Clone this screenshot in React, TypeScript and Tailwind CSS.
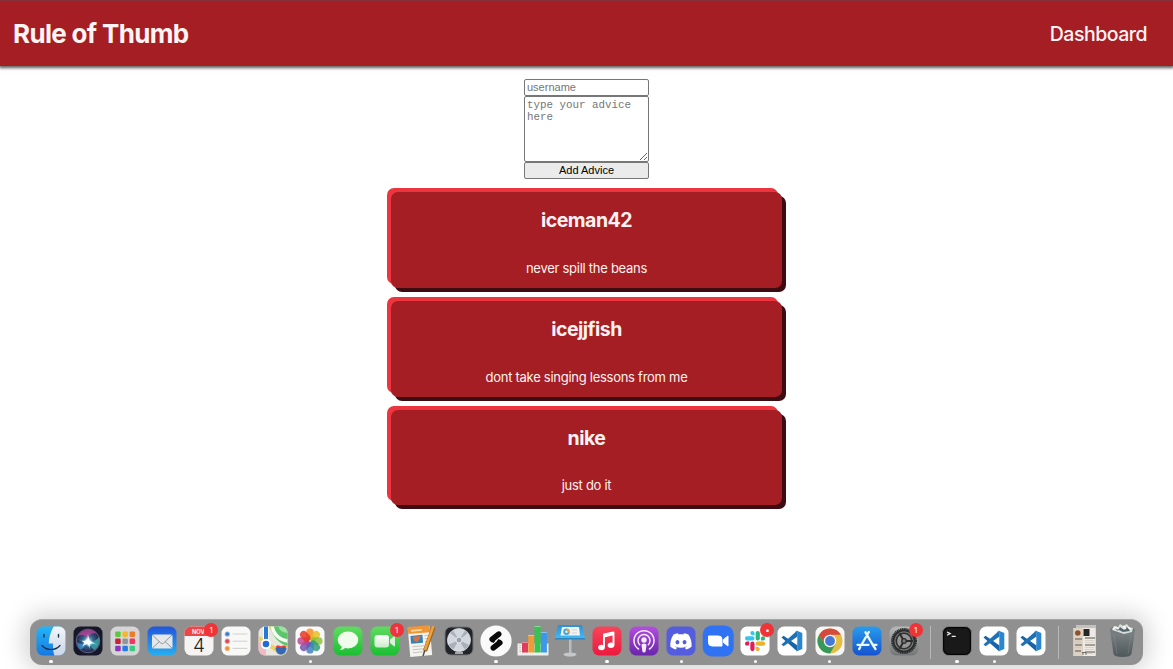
import type { ReactNode } from "react";

type DockItem = { name: string; art: ReactNode; dot?: boolean; badge?: string };

const advice = [
  { user: "iceman42", text: "never spill the beans" },
  { user: "icejjfish", text: "dont take singing lessons from me" },
  { user: "nike", text: "just do it" },
];

function Tile({ fill }: { fill: string }) {
  return <rect x="1.5" y="1.5" width="29" height="29" rx="6.5" fill={fill} />;
}

function Grad({ id, a, b }: { id: string; a: string; b: string }) {
  return (
    <linearGradient id={id} x1="0" y1="0" x2="0" y2="1">
      <stop offset="0" stopColor={a} />
      <stop offset="1" stopColor={b} />
    </linearGradient>
  );
}

const finder = (
  <>
    <defs><clipPath id="finderClip"><rect x="1.5" y="1.5" width="29" height="29" rx="6.5" /></clipPath></defs>
    <g clipPath="url(#finderClip)">
      <rect width="32" height="32" fill="url(#gFinder)" />
      <path d="M19 1C15.5 7 14 12 13.700 18.500H18C17.800 23 18.300 27 19.500 31H32V1Z" fill="url(#gFace)" />
    </g>
    <path d="M9 9.500v2.500M23.500 9.500v2.500" stroke="#18324c" strokeWidth="1.400" strokeLinecap="round" />
    <path d="M7 20.500C11.500 25.800 20.500 25.800 25 20.500" fill="none" stroke="#18324c" strokeWidth="1.200" strokeLinecap="round" />
  </>
);

const siri = (
  <>
    <Tile fill="#17172b" />
    <circle cx="16" cy="16" r="11.800" fill="url(#gSiri)" stroke="#8796b0" strokeWidth=".6" />
    <path d="M6 11C9 4 20 2 25 9C20 7 17 10 16 15C14 10 11 9 6 11Z" fill="#c0459e" opacity=".75" />
    <path d="M5 17C10 21 13 18 15 15C13 22 11 25 8 24Q5 21 5 17Z" fill="#3b9bd8" opacity=".75" />
    <path d="M16 15C20 18 24 16 27 12Q29 20 23 25C21 25 18 20 16 15Z" fill="#39a9a8" opacity=".8" />
    <path d="M6 14C12 17 14 16 16 9C17 15 19 16 26 20C21 19 18 17 18 24C16 20 13 18 9 23C12 19 14 17 6 14Z" fill="#9eeaf0" opacity=".6" />
    <path d="M7 15C13 17 15 16 16.500 11C17 16 19 17 23 18.500C19 18 18 18 17.500 22C16 18 14 18 10 22C13 18 14 17 7 15Z" fill="#fff" />
  </>
);

const launchColors = ["#59c942", "#f3b72f", "#ee7c25", "#c82235", "#8e969a", "#ef3760", "#8d33bc", "#267be5", "#3bc980"];
const launchpad = (
  <>
    <Tile fill="#d5d5d7" />
    {launchColors.map((color, i) => (
      <rect key={color} x={6.2 + (i % 3) * 7.2} y={6.4 + Math.floor(i / 3) * 7.2} width="5.500" height="5.500" rx="1.100" fill={color} />
    ))}
  </>
);

const mail = (
  <>
    <Tile fill="url(#gMail)" />
    <rect x="6" y="9.500" width="20.500" height="14" rx="1.500" fill="#e5e7e9" />
    <path d="m6.500 10 8.200 8q1.500 1.300 3 0L26 10M6.500 23l7-6.500M26 23l-7-6.500" fill="none" stroke="#7c858d" strokeWidth=".8" />
  </>
);

const calendar = (
  <>
    <Tile fill="#f5f4f2" />
    <path d="M1.500 11V8A6.500 6.500 0 0 1 8 1.500H24A6.500 6.500 0 0 1 30.500 8V11Z" fill="#ef4545" />
    <text x="15.300" y="8.800" textAnchor="middle" fontSize="5.700" fontWeight="600" fill="#fff">NOV</text>
    <text x="16" y="26.500" textAnchor="middle" fontSize="19" fontWeight="300" fill="#232323">4</text>
  </>
);

const reminders = (
  <>
    <Tile fill="#f8f8f7" />
    {["#3378cb", "#df424e", "#ee8c31"].map((color, i) => (
      <g key={color} transform={`translate(0 ${i * 7.2})`}>
        <circle cx="7.300" cy="9" r="2.600" fill={color} opacity=".6" />
        <circle cx="7.300" cy="9" r="1.600" fill={color} />
        <path d="M12.500 9h15" stroke="#c5c5c5" strokeWidth=".8" />
      </g>
    ))}
  </>
);

const maps = (
  <>
    <defs><clipPath id="mapClip"><rect x="1.500" y="1.500" width="29" height="29" rx="6.500" /></clipPath></defs>
    <g clipPath="url(#mapClip)">
      <path fill="#e8e7df" d="M0 0h32v32H0z" />
      <path fill="#edb9c2" d="M1 17h8v14H1z" />
      <path d="M2 13 31 33M12 0 32 22" stroke="#eed15d" strokeWidth="4" />
      <path d="M13 0C15 12 23 20 32 21V0Z" fill="#58c669" />
      <path d="M15 0C16 10 24 16 32 16" fill="none" stroke="#f8f8f2" strokeWidth="3.500" />
      <path d="M21 0q1 8 11 8V0z" fill="#a2dfa5" />
      <path d="M9 0v19" stroke="#f7fbff" strokeWidth="6" />
      <path d="M9 0v19" stroke="#287bd5" strokeWidth="4" />
      <circle cx="9" cy="19" r="5.200" fill="white" /><circle cx="9" cy="19" r="3.300" fill="#216cd0" />
      <path d="m18 23 3-2 3 1 3-1 3 2c-1 3-1 6-6 7-5-1-5-4-6-7" fill="#3568b2" stroke="#ddd" strokeWidth=".5" />
      <path d="m19 22 2-1 3 1 3-1 2 1" stroke="#dd4848" strokeWidth="1.500" fill="none" />
    </g>
  </>
);

const petals = ["#f58a1f", "#e3bd20", "#8cc034", "#2f9c78", "#3f80c4", "#7450ac", "#bb4390", "#ea3326"];
const photos = (
  <>
    <Tile fill="#fafafa" />
    {petals.map((color, i) => <rect key={color} x="12.300" y="3.400" width="7.400" height="11.800" rx="3.700" fill={color} opacity=".84" transform={`rotate(${i * 45} 16 16)`} />)}
  </>
);

const messages = (
  <>
    <Tile fill="url(#gGreen)" />
    <ellipse cx="16" cy="15" rx="10.300" ry="8.500" fill="#f0fbeb" />
    <path d="M10 20c0 3-1 4-2.500 5 4 0 5.500-1.500 6.500-3" fill="#e7f5e3" />
  </>
);

const facetime = (
  <>
    <Tile fill="url(#gGreen)" />
    <rect x="5.500" y="10" width="14.500" height="12.500" rx="3" fill="url(#gWhite)" />
    <path d="M21 14.500 25 11.300q1-.6 1 .6v8.700q0 1.200-1 .6l-4-3.200z" fill="#dcf1d9" />
  </>
);

const pages = (
  <>
    <g transform="rotate(-5 15 17)">
      <path fill="#f4f3ee" d="M3 2h22v29H3z" />
      <path fill="#ef9637" d="M3 1h22v7H3z" />
      <path stroke="#ffd9a4" strokeWidth="1.600" d="M6 5h11" />
      <path fill="#3482b8" d="M5 10h12v8H5z" />
      <path d="m7 11 8 0-1 3-3 3-3-2" fill="#dd7040" />
      <path d="M19 11h4m-4 3h4m-4 3h3M6 21h12M6 24h12M6 27h11" stroke="#c4c4c0" />
    </g>
    <path d="m27.500 2-8.500 24" stroke="#a26222" strokeWidth="4.200" />
    <path d="m27 2-8 23" stroke="#f0a136" strokeWidth="2.600" strokeLinecap="round" />
    <path d="m19 25-2 6" stroke="#494949" strokeWidth="1.400" />
  </>
);

const logic = (
  <>
    <rect x="2" y="2" width="28" height="28" rx="6" fill="#22242a" stroke="#737477" />
    <circle cx="16" cy="15" r="11.500" fill="#a9b0b8" stroke="#dce0e5" strokeWidth=".7" />
    <path d="M16 15 10 5.500Q16 2 22 5.500ZM16 15 25 8q4 7 1 12ZM16 15l6 10q-6 3-12 0ZM16 15 5 20q-2-6 2-12Z" fill="#e5e9ee" opacity=".7" />
    <circle cx="16" cy="15" r="3" fill="#9aa3ab" stroke="#e5e8eb" />
    <path d="M12 28h8" stroke="#fff" strokeWidth="1.200" />
  </>
);

const splice = (
  <>
    <circle cx="16" cy="16" r="15.600" fill="#fafafa" />
    <path d="M10.200 12.300 17.200 6.800Q19.500 5.300 21 7.500 22.500 9.800 20.300 11.500L15.300 15.600 13.900 18.100Q10.600 17.500 9.400 15.300 8.800 13.500 10.200 12.300Z" fill="#080a09" />
    <path d="M21.800 19.700 14.800 25.200Q12.500 26.700 11 24.500 9.500 22.200 11.700 20.500L16.700 16.400 18.100 13.900Q21.400 14.500 22.600 16.700 23.200 18.500 21.800 19.700Z" fill="#080a09" />
    <path d="m13 18.900 5.800-5.500" stroke="#fafafa" strokeWidth=".6" />
  </>
);

const numbers = (
  <>
    <path d="M.5 18.500h31v12H.500z" fill="#eeeeec" /><path d="M3 20v8m0-1.500h27" stroke="#b3b3b3" strokeDasharray="1 1" />
    {([ ["#dd3f5a", 5, 17], ["#f29a35", 11.3, 10], ["#35c352", 17.6, 1], ["#3b97e9", 23.9, 7] ] as [string, number, number][]).map(([color, x, y]) => (
      <g key={color}><rect x={x} y={y} width="6" height={27.5 - y} fill={color} /><path d={`M${x} ${y + .5}h6`} stroke="#fff" opacity=".4" /></g>
    ))}
  </>
);

const keynote = (
  <>
    <path d="M15 13h2.500v16H15z" fill="#b8bdc1" /><ellipse cx="16" cy="29.500" rx="6.500" ry="2" fill="#c4c8ca" />
    <path d="M4 0h24l3 13H1z" fill="url(#gKeynote)" /><path d="M1 13h30v1.500H1z" fill="#2d86bd" />
    <path d="M8 2h17l1 8.500H6.500z" fill="#f1f4f2" />
    <circle cx="12.500" cy="6.800" r="2.300" fill="none" stroke="#3daade" strokeWidth="2" /><path d="M12.500 4.500a2.300 2.300 0 0 1 2 3" fill="none" stroke="#e9a242" strokeWidth="2" />
    <path d="M17.500 5h5.500m-5.500 3h5.500" stroke="#c9d5da" />
  </>
);

const music = (
  <>
    <Tile fill="url(#gMusic)" />
    <path d="M13 22V9.500L22.500 7.400V20" fill="none" stroke="#fff" strokeWidth="1.900" strokeLinejoin="round" />
    <path d="m13 9 9.500-2.100v3.300L13 12.400z" fill="#fff" />
    <ellipse cx="10.500" cy="22.500" rx="3.300" ry="2.700" fill="#fff" /><ellipse cx="20" cy="20.300" rx="3.300" ry="2.700" fill="#fff" />
  </>
);

const podcasts = (
  <>
    <Tile fill="url(#gPod)" />
    <path d="M10.500 24a10 10 0 1 1 11 0M11.700 19.700a6 6 0 1 1 8.600 0" fill="none" stroke="#f5eaff" strokeWidth="1.500" strokeLinecap="round" />
    <circle cx="16" cy="15" r="2.700" fill="#f5eaff" /><path d="M13.500 20q0-1.500 2.500-1.500t2.500 1.500l-.8 6q-.2 1.500-1.700 1.500t-1.700-1.500z" fill="#f5eaff" />
  </>
);

const discord = (
  <>
    <Tile fill="#535ddd" />
    <path transform="translate(5.300 5.700) scale(.89)" fill="#fff" d="M20.317 4.3698a19.7913 19.7913 0 00-4.8851-1.5152.0741.0741 0 00-.0785.0371c-.211.3753-.4447.8648-.6083 1.2495-1.8447-.2762-3.68-.2762-5.4868 0-.1636-.3933-.4058-.8742-.6177-1.2495a.077.077 0 00-.0785-.037 19.7363 19.7363 0 00-4.8852 1.515.0699.0699 0 00-.0321.0277C.5334 9.0458-.319 13.5799.0992 18.0578a.0824.0824 0 00.0312.0561c2.0528 1.5076 4.0413 2.4228 5.9929 3.0294a.0777.0777 0 00.0842-.0276c.4616-.6304.8731-1.2952 1.226-1.9942a.076.076 0 00-.0416-.1057c-.6528-.2476-1.2743-.5495-1.8722-.8923a.077.077 0 01-.0076-.1277c.1258-.0943.2517-.1923.3718-.2914a.0743.0743 0 01.0776-.0105c3.9278 1.7933 8.18 1.7933 12.0614 0a.0739.0739 0 01.0785.0095c.1202.099.246.1981.3728.2924a.077.077 0 01-.0066.1276 12.2986 12.2986 0 01-1.873.8914.0766.0766 0 00-.0407.1067c.3604.698.7719 1.3628 1.225 1.9932a.076.076 0 00.0842.0286c1.961-.6067 3.9495-1.5219 6.0023-3.0294a.077.077 0 00.0313-.0552c.5004-5.177-.8382-9.6739-3.5485-13.6604a.061.061 0 00-.0312-.0286zM8.02 15.3312c-1.1825 0-2.1569-1.0857-2.1569-2.419 0-1.3332.9555-2.4189 2.157-2.4189 1.2108 0 2.1757 1.0952 2.1568 2.419 0 1.3332-.9555 2.4189-2.1569 2.4189zm7.9748 0c-1.1825 0-2.1569-1.0857-2.1569-2.419 0-1.3332.9554-2.4189 2.1569-2.4189 1.2108 0 2.1757 1.0952 2.1568 2.419 0 1.3332-.946 2.4189-2.1568 2.4189Z" />
  </>
);

const zoom = (
  <>
    <rect x=".7" y=".5" width="31" height="31" rx="9" fill="#2f73f4" />
    <path d="M6.500 11h10q3.500 0 3.500 3.500V21H10q-3.500 0-3.500-3.500zM21.500 14.500l4.500-3.500v10l-4.500-3.500z" fill="#fff" stroke="#fff" strokeWidth="1" strokeLinejoin="round" />
  </>
);

const slack = (
  <>
    <Tile fill="#fff" />
    <g transform="translate(6 6) scale(.84)">
      <path fill="#e01e5a" d="M5.042 15.165a2.528 2.528 0 0 1-2.520 2.523A2.528 2.528 0 0 1 0 15.165a2.527 2.527 0 0 1 2.522-2.520h2.520zM6.313 15.165a2.527 2.527 0 0 1 2.521-2.520 2.527 2.527 0 0 1 2.521 2.520v6.313A2.528 2.528 0 0 1 8.834 24a2.528 2.528 0 0 1-2.521-2.522z" />
      <path fill="#36c5f0" d="M8.834 5.042a2.528 2.528 0 0 1-2.521-2.520A2.528 2.528 0 0 1 8.834 0a2.528 2.528 0 0 1 2.521 2.522v2.520zM8.834 6.313a2.528 2.528 0 0 1 2.521 2.521 2.528 2.528 0 0 1-2.521 2.521H2.522A2.528 2.528 0 0 1 0 8.834a2.528 2.528 0 0 1 2.522-2.521z" />
      <path fill="#2eb67d" d="M18.956 8.834a2.528 2.528 0 0 1 2.522-2.521A2.528 2.528 0 0 1 24 8.834a2.528 2.528 0 0 1-2.522 2.521h-2.522zM17.688 8.834a2.528 2.528 0 0 1-2.523 2.521 2.527 2.527 0 0 1-2.520-2.521V2.522A2.527 2.527 0 0 1 15.165 0a2.528 2.528 0 0 1 2.523 2.522z" />
      <path fill="#ecb22e" d="M15.165 18.956a2.528 2.528 0 0 1 2.523 2.522A2.528 2.528 0 0 1 15.165 24a2.527 2.527 0 0 1-2.520-2.522v-2.522zM15.165 17.688a2.527 2.527 0 0 1-2.520-2.523 2.526 2.526 0 0 1 2.520-2.520h6.313A2.527 2.527 0 0 1 24 15.165a2.528 2.528 0 0 1-2.522 2.523z" />
    </g>
  </>
);

const code = (
  <>
    <Tile fill="#fff" />
    <path d="M5.500 12.500 7.600 10.700 21.500 20.600V26.300L20.500 25.800Z" fill="#1765a8" />
    <path d="M5.500 19.500 20.500 6.200 21.500 5.700V11.400L7.600 21.300Z" fill="#1f70b5" />
    <path d="m20.300 5.500 6 2.600v15.800l-6 2.600 1-1.500V7z" fill="#2a86cf" />
  </>
);

const chrome = (
  <>
    <Tile fill="#f6f6f4" />
    <circle cx="16" cy="16" r="12.500" fill="#e5bd42" />
    <path d="M5.170 9.750A12.500 12.500 0 0 1 26.830 9.750H16L10.600 19.130Z" fill="#d5493e" />
    <path d="M5.170 9.750A12.500 12.500 0 0 0 16 28.500L21.400 19.130H10.600Z" fill="#36985b" />
    <circle cx="16" cy="16" r="6.200" fill="#f7f8f6" /><circle cx="16" cy="16" r="4.900" fill="#4579d5" />
  </>
);

const appStore = (
  <>
    <Tile fill="url(#gStore)" />
    <path d="m17.800 7-7.300 12.800m4-12.500 8.300 14.300M6.500 19.800h11m5 0h3M9.300 22l-1.200 2.100m14.900-2.500 1.500 2.500" stroke="#e8f8fc" strokeWidth="2.300" strokeLinecap="round" fill="none" />
  </>
);

const settings = (
  <>
    <Tile fill="url(#gSettings)" />
    <circle cx="16" cy="16" r="12" fill="#777" stroke="#303233" strokeWidth="2" strokeDasharray="1.300 .5" />
    <circle cx="16" cy="16" r="10.600" fill="none" stroke="#2b2c2d" strokeWidth="1.800" />
    <circle cx="16" cy="16" r="7.700" fill="#969696" stroke="#303030" strokeWidth="1.600" />
    <path d="M16 16h9M16 16l-4.500-7.800M16 16l-4.500 7.800" stroke="#2c2c2c" strokeWidth="2" />
    <circle cx="16" cy="16" r="2.300" fill="#777" stroke="#2c2c2c" strokeWidth="1.300" />
  </>
);

const terminal = (
  <>
    <rect x="2.200" y="2.200" width="27.600" height="27.600" rx="6" fill="#191919" stroke="#050505" strokeWidth="2" />
    <rect x="1.500" y="1.500" width="29" height="29" rx="6.500" fill="none" stroke="#929292" strokeWidth=".8" />
    <path d="m6 7 3.200 1.600L6 10.200M10.700 11.300h4" fill="none" stroke="#eee" strokeWidth="1.200" />
  </>
);

const documents = (
  <>
    <path d="M7 0h20v31H7z" fill="#c2c1bd" /><path d="M4.500 3h22v28h-22z" fill="#eeeae3" /><path d="M4.500 3h9.500v28H4.500z" fill="#ded3c3" />
    <circle cx="8.800" cy="8" r="2.800" fill="#8b542d" /><path d="M14.500 4h6v7h-6z" fill="#252729" />
    <path d="M6 14h7m-7 6h7m-7 6h6m4-13h10m-10 7h10m-10 7h10" stroke="#575451" strokeWidth="1.100" />
    <path d="M6 16h6m-6 1.500h6m-6 5h6m4-7h9m-9 2h9m-9 5h9m-9 2h9m-9 4h8" stroke="#c8c1b7" strokeWidth=".6" />
    <path d="M13 27.500h4m-3 0v2.500m3-2.500v2.500" stroke="#555" strokeWidth=".8" />
  </>
);

const trash = (
  <>
    <path d="M4 5h25l-3.500 24q-1 3-9 3t-9-3z" fill="url(#gTrash)" />
    <ellipse cx="16.500" cy="5" rx="12.500" ry="4" fill="#747b7d" />
    <path d="m6 5 2-4 4 1 2-3 3 2 4-2 2 3 4 1-1 4-8 2z" fill="#d9dedb" />
    <path d="m9 3 3 3 2-4 4 3 3-3 3 4-7 1z" fill="#536469" /><path d="m7 4 3-2 2 2m5-3 3 3m2-2 3 2" stroke="#fff" strokeWidth="1.200" fill="none" />
    <path d="m8 10 3 19m11 0 3-19" stroke="#b1b7b8" strokeWidth=".8" opacity=".25" />
  </>
);

const mainApps: DockItem[] = [
  { name: "finder", art: finder, dot: true }, { name: "siri", art: siri }, { name: "launchpad", art: launchpad },
  { name: "mail", art: mail }, { name: "calendar", art: calendar, badge: "1" }, { name: "reminders", art: reminders },
  { name: "maps", art: maps }, { name: "photos", art: photos, dot: true }, { name: "messages", art: messages },
  { name: "facetime", art: facetime, badge: "1" }, { name: "pages", art: pages }, { name: "logic", art: logic },
  { name: "splice", art: splice, dot: true }, { name: "numbers", art: numbers }, { name: "keynote", art: keynote },
  { name: "music", art: music, dot: true }, { name: "podcasts", art: podcasts }, { name: "discord", art: discord, dot: true },
  { name: "zoom", art: zoom }, { name: "slack", art: slack, dot: true, badge: "•" }, { name: "code", art: code },
  { name: "chrome", art: chrome, dot: true }, { name: "store", art: appStore }, { name: "settings", art: settings, badge: "1" },
];
const recentApps: DockItem[] = [
  { name: "terminal", art: terminal, dot: true }, { name: "code-project", art: code, dot: true }, { name: "code-window", art: code },
];
const dockFiles: DockItem[] = [{ name: "documents", art: documents }, { name: "trash", art: trash }];

function DockGroup({ items }: { items: DockItem[] }) {
  return (
    <div className="flex">
      {items.map(({ name, art, dot, badge }) => (
        <div key={name} className="relative flex w-[37.08px] flex-col items-center pt-[5px]">
          <svg viewBox="0 0 32 32" className="h-8 w-8 overflow-visible font-['Inter',sans-serif]">{art}</svg>
          {dot && <span className="mt-[2.500px] h-[3.500px] w-[3.500px] rounded-full bg-white" />}
          {badge && <span className="absolute top-[3px] left-[23.5px] flex h-[14px] w-[14px] items-center justify-center rounded-full bg-[#ee3438] text-[8px] leading-none text-white">{badge}</span>}
        </div>
      ))}
    </div>
  );
}

function Gradients() {
  return (
    <svg className="absolute h-0 w-0" aria-hidden="true">
      <defs>
        <Grad id="gFinder" a="#24b9fb" b="#1675df" /><Grad id="gFace" a="#f3f7fb" b="#c9d5e7" />
        <Grad id="gMail" a="#2155db" b="#28afee" /><Grad id="gGreen" a="#60dc61" b="#1bbe32" />
        <Grad id="gWhite" a="#ffffff" b="#cbebc8" /><Grad id="gKeynote" a="#2b91d1" b="#45b8f0" />
        <Grad id="gMusic" a="#f64659" b="#ee193d" /><Grad id="gPod" a="#b44de0" b="#6925a9" />
        <Grad id="gStore" a="#279cec" b="#1653d0" /><Grad id="gSettings" a="#b6bab9" b="#747676" />
        <Grad id="gTrash" a="#7e8587" b="#4e575a" />
        <radialGradient id="gSiri"><stop offset="0" stopColor="#9bd1e5" /><stop offset=".5" stopColor="#325d89" /><stop offset="1" stopColor="#292043" /></radialGradient>
      </defs>
    </svg>
  );
}

export default function App() {
  return (
    <div className="flex h-[669px] w-full flex-col overflow-hidden bg-white font-['Inter',sans-serif]">
      <Gradients />
      <header className="flex h-[66px] shrink-0 items-center justify-between border-t border-[#85323a] bg-[#a51e24] pr-[26px] pl-[13px] text-[#fff3f3] shadow-[0_1px_3px_1px_rgba(0,0,0,0.65)]">
        <h1 className="pt-px text-[26px] leading-none font-bold tracking-[-0.68px]">Rule of Thumb</h1>
        <a className="pt-[2px] text-[19.5px] leading-none font-medium tracking-[-0.5px]">Dashboard</a>
      </header>
      <main className="flex flex-1 flex-col items-center pt-[13px]">
        <form className="flex w-[125px] flex-col font-['Liberation_Sans',sans-serif] text-[11px]">
          <input placeholder="username" className="h-[17px] rounded-[2px] border border-[#777] px-[2px] pb-[2px] leading-none outline-none placeholder:text-[#757575]" />
          <textarea placeholder="type your advice here" className="h-[66px] resize rounded-[2px] border border-[#777] px-[2px] pt-[2px] font-['Liberation_Mono',monospace] text-[10.83px] leading-[12px] outline-none placeholder:text-[#757575]" />
          <button type="button" className="h-[17px] rounded-[2px] border border-[#777] bg-[#ebebeb] leading-none text-black">Add Advice</button>
        </form>
        <section className="mt-[13px] flex w-[391px] flex-col gap-[13px]">
          {advice.map((item) => (
            <article key={item.user} className="group flex h-[96px] flex-col items-center rounded-[7px] bg-[#a51e24] pt-[16px] text-[#fff1f1] shadow-[-4px_-4px_0_#ed3540,4px_4px_0_#3d0c12] last:h-[95px]">
              <h2 className="text-[19.5px] leading-[24px] font-bold tracking-[-0.5px]">{item.user}</h2>
              <p className="mt-[27px] text-[13px] leading-[18px] tracking-[-0.27px] group-last:mt-[26px]">{item.text}</p>
            </article>
          ))}
        </section>
      </main>
      <footer className="mb-[4px] ml-[30px] flex h-[46px] w-[1113px] shrink-0 rounded-[12px] border-t border-[#a5a5a5] bg-[#909090] pl-[2.400px] shadow-[0_0_24px_5px_rgba(0,0,0,0.18)]">
        <DockGroup items={mainApps} />
        <div className="flex w-[16.4px] shrink-0 justify-center pt-[6px]"><span className="h-[33px] w-px bg-[#b9b9b9]" /></div>
        <DockGroup items={recentApps} />
        <div className="flex w-[16.8px] shrink-0 justify-center pt-[6px]"><span className="h-[33px] w-px bg-[#b9b9b9]" /></div>
        <DockGroup items={dockFiles} />
      </footer>
    </div>
  );
}
